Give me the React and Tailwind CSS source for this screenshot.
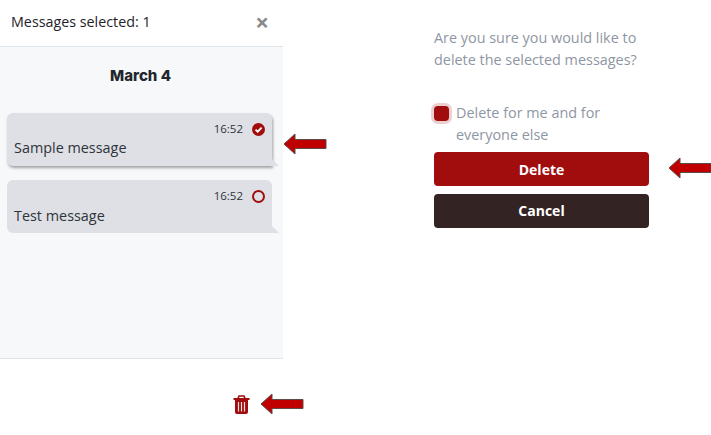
import React from 'react'

const openSans = "font-['Open_Sans',sans-serif]"

function Arrow({ className }) {
  return (
    <svg className={className} width="44" height="22" viewBox="0 0 44 22">
      <polygon points="1,11 12,1 12,6.5 43,6.5 43,15.5 12,15.5 12,21" fill="#c00000" stroke="#5f4a4a" strokeWidth="1" />
    </svg>
  )
}

function TrashIcon() {
  return (
    <svg width="17" height="20" viewBox="0 0 17 20" fill="none">
      <path d="M5 3.5 L6 1 H11 L12 3.5" stroke="#a10c0c" strokeWidth="1.6" />
      <path d="M0.5 4 H16.5" stroke="#a10c0c" strokeWidth="2" />
      <path d="M2 4 H15 V17 Q15 19 13 19 H4 Q2 19 2 17 Z" fill="#a10c0c" />
      <path d="M5.5 7 V16.5 M8.5 7 V16.5 M11.5 7 V16.5" stroke="#f3dcdc" strokeWidth="1.2" />
    </svg>
  )
}

function Bubble({ text, selected, textClass }) {
  return (
    <div className={`relative h-[53px] w-[265px] rounded-l-md rounded-tr-md bg-[#dee0e5] pl-[7px] pr-[7px] pt-[7px] ${selected ? 'shadow-[1px_2px_3px_rgba(0,0,0,0.35)]' : ''}`}>
      <div className="flex items-center justify-end gap-[9px] h-[18px]">
        <span className="text-[11.5px] leading-[18px] text-[#2f333a]">16:52</span>
        {selected ? (
          <svg width="13" height="13" viewBox="0 0 13 13">
            <circle cx="6.5" cy="6.5" r="6.5" fill="#a10c0c" />
            <path d="M3.5 6.6 L5.7 8.7 L9.6 4.6" fill="none" stroke="#fff" strokeWidth="1.8" />
          </svg>
        ) : (
          <span className="w-[13px] h-[13px] rounded-full border-2 border-[#a10c0c]"></span>
        )}
      </div>
      <div className={`text-[14.4px] leading-[20px] text-[#2f333a] ${textClass}`}>{text}</div>
      <div className="absolute left-full bottom-0 w-0 h-0 border-l-[7px] border-l-[#dee0e5] border-t-[7px] border-t-transparent"></div>
    </div>
  )
}

export default function App() {
  return (
    <div className={`relative flex h-[435px] w-[711px] overflow-hidden bg-white ${openSans}`}>
      <div className="flex flex-col w-[283px]">
        <div className="flex items-center justify-between h-[47px] pl-[11px] pr-[14px] pb-[3px] border-b border-[#dfe3ea]">
          <span className="text-[14.3px] text-[#1f2329]">Messages selected: 1</span>
          <span className="text-[#8a8a8a] text-[24px] leading-none font-bold">×</span>
        </div>
        <div className="flex-1 bg-[#f7f8fa] pl-[7px] border-b border-[#dfe3ea]">
          <div className="pt-[19px] pr-[9px] text-center font-['Inter',sans-serif] font-extrabold text-[15px] leading-[20px] text-[#22262c] mb-[27px]">March 4</div>
          <div className="flex flex-col gap-[14px]">
            <Bubble text="Sample message" selected />
            <Bubble text="Test message" textClass="pt-[1px]" />
          </div>
        </div>
        <div className="flex justify-end items-center h-[76px] pr-[33px] pt-[15px]">
          <TrashIcon />
        </div>
      </div>

      <div className="ml-[151px] w-[215px] pt-[27px]">
        <p className="text-[14.4px] leading-[22px] text-[#8f96a3]">
          Are you sure you would like to
          <br />
          delete the selected messages?
        </p>
        <div className="flex mt-[31px] gap-[7px]">
          <span className="mt-[4px] w-[15px] h-[15px] shrink-0 rounded-[4px] bg-[#a10c0c] shadow-[0_0_0_3px_#eccfcf]"></span>
          <span className="text-[14.4px] leading-[22px] text-[#8f96a3]">
            Delete for me and for
            <br />
            everyone else
          </span>
        </div>
        <button className="block w-full h-[34px] mt-[6px] rounded-[4px] bg-[#a10c0c] text-white text-[14px] font-bold">Delete</button>
        <button className="block w-full h-[34px] mt-[8px] pb-[2px] rounded-[4px] bg-[#332323] text-white text-[14px] font-bold">Cancel</button>
      </div>

      <Arrow className="absolute left-[283px] top-[133px]" />
      <Arrow className="absolute left-[668px] top-[157px]" />
      <Arrow className="absolute left-[260px] top-[393px]" />
    </div>
  )
}
